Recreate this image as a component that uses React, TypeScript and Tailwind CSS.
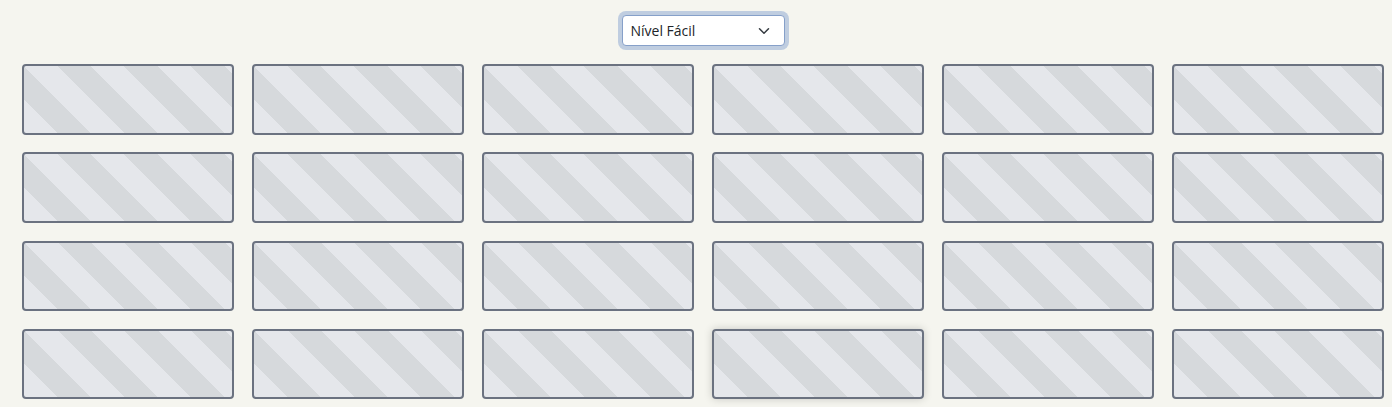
import React from "react";

export default function App() {
  const cards = Array.from({ length: 24 }, (_, i) => i);
  return (
    <div className="min-h-[407px] w-full bg-[#f5f5ef] font-['Open_Sans',sans-serif]">
      <div className="ml-[22px] flex w-[1362px] flex-col items-center pt-[15px]">
        <div className="relative flex h-[31px] w-[163px] items-center rounded-[4px] border border-[#86a0c9] bg-white pl-[8px] shadow-[0_0_0_4px_#bfcde0]">
          <span className="text-[14px] leading-none text-[#212529]">Nível Fácil</span>
          <svg
            className="absolute right-[12px] top-1/2 h-[12px] w-[16px] -translate-y-1/2"
            viewBox="0 0 16 16"
            fill="none"
            stroke="#343a40"
            strokeWidth="2"
            strokeLinecap="round"
            strokeLinejoin="round"
          >
            <path d="m2 5 6 6 6-6" />
          </svg>
        </div>
        <div className="mt-[18px] grid w-full grid-cols-6 gap-x-[18px] gap-y-[17.6px]">
          {cards.map((i) => (
            <div
              key={i}
              className={
                "aspect-[3/1] rounded-[4px] border-2 border-[#6b7280] bg-[repeating-linear-gradient(45deg,#e5e7eb_0_23.6px,#d6d9dc_23.6px_47.2px)]" +
                (i === 21 ? " shadow-[0_0_8px_rgba(0,0,0,0.18)]" : "")
              }
            />
          ))}
        </div>
      </div>
    </div>
  );
}
